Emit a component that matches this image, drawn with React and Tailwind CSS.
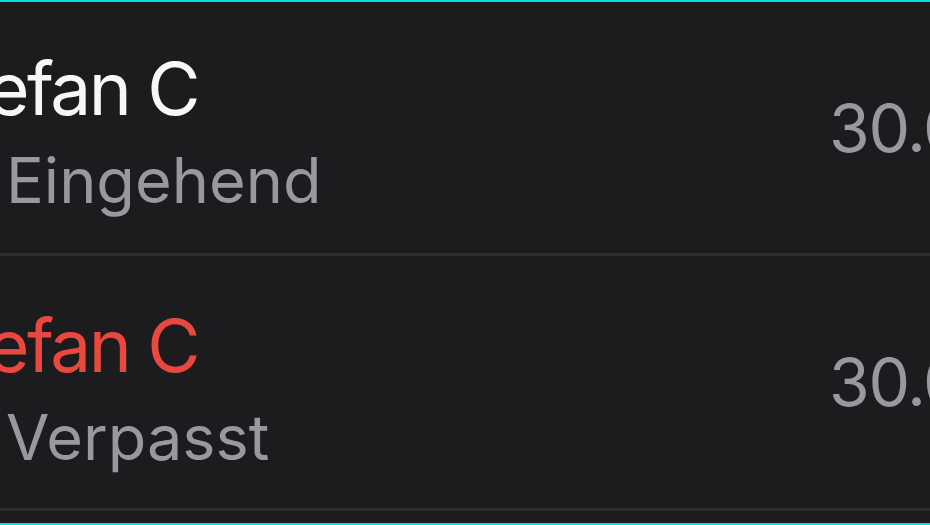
export default function App() {
  const rows = [
    { name: "Stefan C", sub: "Eingehend", missed: false, pt: "pt-[50px]", h: "h-[251px]" },
    { name: "Stefan C", sub: "Verpasst", missed: true, pt: "pt-[53px]", h: "h-[252px]" },
  ];
  return (
    <div
      className="w-[930px] h-[525px] overflow-hidden bg-[#1c1c1e] border-t-2 border-b-2 border-[#00e1e8] flex flex-col"
      style={{ fontFamily: "Inter, 'Noto Sans', sans-serif" }}
    >
      {rows.map((r, i) => (
        <div key={i} className="flex flex-col">
          <div className={`flex items-center ${r.h} overflow-hidden`}>
            <div className={`flex-1 self-stretch flex flex-col ${r.pt} overflow-hidden`}>
              <div
                className={`-ml-[78px] text-[73px] leading-[73px] whitespace-nowrap tracking-[-0.035em] ${
                  r.missed ? "text-[#e9483e]" : "text-[#f7f7f7]"
                }`}
              >
                {r.name}
              </div>
              <div className="mt-[24px] ml-[6px] text-[63px] leading-[63px] whitespace-nowrap text-[#98989e]">
                {r.sub}
              </div>
            </div>
            <div className="w-[101px] shrink-0 overflow-hidden whitespace-nowrap text-[66px] leading-[66px] text-[#98989e] tracking-[-0.02em]">
              30.06.23
            </div>
          </div>
          <div className="h-[3px] bg-[#2e2e31]" />
        </div>
      ))}
      <div className="flex-1" />
    </div>
  );
}
